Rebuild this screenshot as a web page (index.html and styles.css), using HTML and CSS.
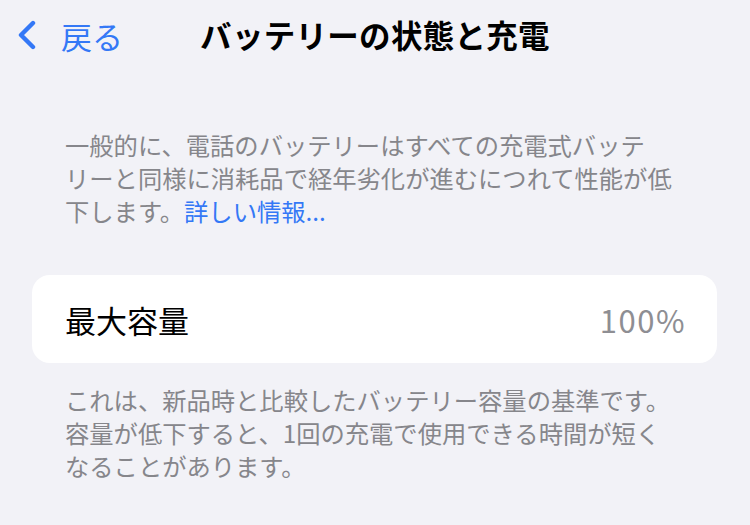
FILE: index.html
```html
<!DOCTYPE html>
<html lang="ja">

<head>
    <meta charset="UTF-8">
    <meta name="viewport" content="width=device-width, initial-scale=1.0">
    <title>バッテリーの状態と充電</title>
    <link rel="stylesheet" href="styles.css">
</head>

<body>
    <header class="nav">
        <a class="back" href="#">
            <svg class="chevron" width="22" height="30" viewBox="0 0 22 30">
                <path d="M17 3 L5 15 L17 27" fill="none" stroke="currentColor" stroke-width="4.4"
                    stroke-linecap="round" stroke-linejoin="round" />
            </svg>
            <span>戻る</span>
        </a>
        <h1 class="title">バッテリーの状態と充電</h1>
        <div></div>
    </header>

    <p class="note intro">
        一般的に、電話のバッテリーはすべての充電式バッテ<br>リーと同様に消耗品で経年劣化が進むにつれて性能が低<br>下します。<a class="link" href="#">詳しい情報...</a>
    </p>

    <div class="card">
        <span class="label">最大容量</span>
        <span class="value">100%</span>
    </div>

    <p class="note after">
        これは、新品時と比較したバッテリー容量の基準です。<br>容量が低下すると、1回の充電で使用できる時間が短く<br>なることがあります。
    </p>
</body>

</html>
```

FILE: styles.css
```css
body {
    margin: 0;
    background-color: #f2f2f7;
    font-family: "Noto Sans CJK JP", "Noto Sans", sans-serif;
    color: #000;
}

.nav {
    display: grid;
    grid-template-columns: 1fr auto 1fr;
    align-items: center;
    height: 70px;
}

.back {
    display: flex;
    align-items: center;
    gap: 23px;
    padding-left: 16px;
    color: #3478f6;
    text-decoration: none;
    font-size: 31px;
    line-height: 1;
}

.chevron {
    display: block;
}

.title {
    margin: 0;
    font-size: 31.5px;
    font-weight: 700;
    line-height: 1;
    letter-spacing: 0.3px;
}

.note {
    margin: 0;
    padding: 0 30px 0 65px;
    font-size: 24.3px;
    line-height: 33px;
    color: #86868b;
}

.intro {
    margin-top: 58px;
}

.link {
    color: #3478f6;
    text-decoration: none;
}

.card {
    display: flex;
    justify-content: space-between;
    align-items: center;
    margin: 48px 33px 0 32px;
    height: 88px;
    padding: 0 31px 0 33px;
    background-color: #fff;
    border-radius: 18px;
}

.label {
    font-size: 31px;
}

.value {
    font-size: 31px;
    letter-spacing: 1.5px;
    color: #8e8e93;
}

.after {
    margin-top: 20px;
}
```
